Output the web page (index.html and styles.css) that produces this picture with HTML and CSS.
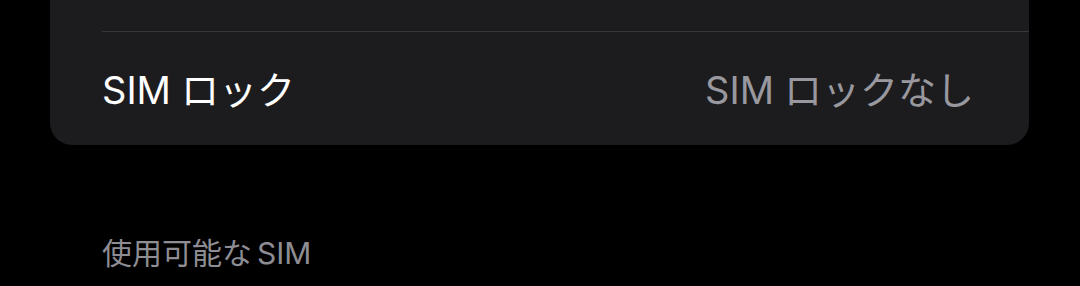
FILE: index.html
```html
<!DOCTYPE html>
<html lang="ja">
<head>
<meta charset="utf-8">
<link rel="stylesheet" href="styles.css">
</head>
<body>
<div class="card">
  <div class="row-top"></div>
  <div class="row">
    <span class="label"><span class="latin">SIM</span>ロック</span>
    <span class="value"><span class="latin">SIM</span>ロックなし</span>
  </div>
</div>
<div class="section-header">使用可能な<span class="latin-h">SIM</span></div>
</body>
</html>
```
FILE: styles.css
```css
html, body {
  margin: 0;
  padding: 0;
  background: #000000;
  width: 1080px;
  height: 286px;
  overflow: hidden;
  font-family: Inter, "Noto Sans CJK JP", sans-serif;
}
.card {
  margin: 0 51px 0 50px;
  background: #1c1c1e;
  border-radius: 0 0 22px 22px;
}
.row-top {
  height: 31px;
  margin-left: 52px;
  border-bottom: 1px solid #38383a;
}
.row {
  height: 111px;
  display: flex;
  align-items: center;
  justify-content: space-between;
  padding: 0 55px 2px 52px;
  font-size: 38px;
}
.latin {
  margin-right: 10px;
}
.label {
  color: #ffffff;
}
.value {
  color: #98989e;
}
.section-header {
  padding: 84px 0 0 102px;
  font-size: 30px;
  color: #8d8d93;
}
.latin-h {
  margin-left: 5px;
}
```
